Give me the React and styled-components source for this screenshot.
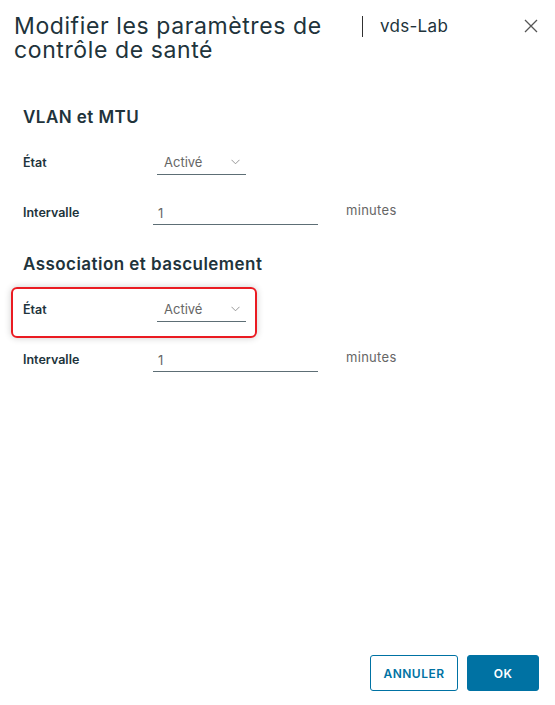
import React from "react";
import styled, { createGlobalStyle } from "styled-components";

const GlobalStyle = createGlobalStyle`
  html, body {
    margin: 0;
    padding: 0;
    background: #ffffff;
  }
  body {
    font-family: Inter, "Noto Sans", sans-serif;
    color: #21333b;
  }
`;

const Dialog = styled.div`
  width: 555px;
  height: 705px;
  box-sizing: border-box;
  display: flex;
  flex-direction: column;
  padding: 14px 16px 14px 14px;
`;

const Header = styled.header`
  display: flex;
  align-items: flex-start;
`;

const Title = styled.h1`
  margin: 0;
  width: 330px;
  font-size: 23px;
  line-height: 24px;
  letter-spacing: 0.6px;
  font-weight: 400;
  color: #21333b;
`;

const Divider = styled.span`
  width: 1px;
  height: 21px;
  margin: 2px 17px 0 18px;
  background: #313131;
`;

const Subtitle = styled.span`
  flex: 1;
  font-size: 17px;
  line-height: 24px;
  letter-spacing: 0.3px;
  color: #21333b;
`;

const CloseButton = styled.button`
  border: 0;
  background: none;
  padding: 0;
  margin: 5px 1px 0 0;
  width: 14px;
  height: 14px;
  color: #565656;
  display: flex;
`;

const Body = styled.main`
  padding: 45px 0 0 9px;
`;

const SectionTitle = styled.h2`
  margin: ${({ $first }) => ($first ? "0" : "17px")} 0 10px;
  height: 20px;
  font-size: 17px;
  line-height: 20px;
  letter-spacing: 0.45px;
  font-weight: 600;
  color: #21333b;
`;

const Row = styled.div`
  position: relative;
  height: 50px;
  display: flex;
  align-items: center;
`;

const Label = styled.label`
  width: 130px;
  font-size: 12.5px;
  font-weight: 600;
  color: #21333b;
`;

const Select = styled.div`
  margin-left: 4px;
  width: 89px;
  box-sizing: border-box;
  height: 24px;
  display: flex;
  align-items: center;
  justify-content: space-between;
  padding: 0 6px 0 7px;
  border-bottom: 1px solid #5d6e75;
  font-size: 13px;
  color: #666666;
  margin-top: 1px;
`;

const Input = styled.div`
  width: 165px;
  box-sizing: border-box;
  height: 24px;
  display: flex;
  align-items: center;
  padding: 0 5px;
  border-bottom: 1px solid #5d6e75;
  font-size: 13px;
  color: #666666;
  margin-top: 2px;
`;

const Unit = styled.span`
  margin-left: 28px;
  font-size: 13px;
  letter-spacing: 0.3px;
  color: #666666;
  margin-top: -4px;
`;

const Highlight = styled.div`
  position: absolute;
  left: -12px;
  top: 3px;
  width: 246px;
  height: 51px;
  box-sizing: border-box;
  border: 2px solid #ea1b22;
  border-radius: 6px;
  box-shadow: 0 0 7px rgba(0, 0, 0, 0.2);
  pointer-events: none;
`;

const Footer = styled.footer`
  margin-top: auto;
  display: flex;
  justify-content: flex-end;
  gap: 9px;
`;

const Button = styled.button`
  height: 36px;
  box-sizing: border-box;
  border-radius: 3px;
  border: 1px solid #0072a3;
  font-family: inherit;
  font-size: 12px;
  font-weight: 600;
  letter-spacing: 0.5px;
  padding: 0;
  width: ${({ $width }) => $width}px;
  background: ${({ $primary }) => ($primary ? "#0072a3" : "#ffffff")};
  color: ${({ $primary }) => ($primary ? "#ffffff" : "#0072a3")};
`;

const Chevron = () => (
  <svg width="9" height="6" viewBox="0 0 9 6" fill="none">
    <path d="M0.5 0.8 L4.5 4.8 L8.5 0.8" stroke="#8c8c8c" strokeWidth="0.9" />
  </svg>
);

const CloseIcon = () => (
  <svg width="14" height="14" viewBox="0 0 14 14" fill="none">
    <path d="M1 1 L13 13 M13 1 L1 13" stroke="currentColor" strokeWidth="1.3" />
  </svg>
);

const StateRow = ({ highlighted }) => (
  <Row>
    {highlighted && <Highlight />}
    <Label>État</Label>
    <Select>
      <span>Activé</span>
      <Chevron />
    </Select>
  </Row>
);

const IntervalRow = () => (
  <Row>
    <Label>Intervalle</Label>
    <Input>1</Input>
    <Unit>minutes</Unit>
  </Row>
);

export default function App() {
  return (
    <>
      <GlobalStyle />
      <Dialog>
        <Header>
          <Title>Modifier les paramètres de contrôle de santé</Title>
          <Divider />
          <Subtitle>vds-Lab</Subtitle>
          <CloseButton aria-label="Fermer">
            <CloseIcon />
          </CloseButton>
        </Header>
        <Body>
          <SectionTitle $first>VLAN et MTU</SectionTitle>
          <StateRow />
          <IntervalRow />
          <SectionTitle>Association et basculement</SectionTitle>
          <StateRow highlighted />
          <IntervalRow />
        </Body>
        <Footer>
          <Button $width={88}>ANNULER</Button>
          <Button $width={72} $primary>OK</Button>
        </Footer>
      </Dialog>
    </>
  );
}
